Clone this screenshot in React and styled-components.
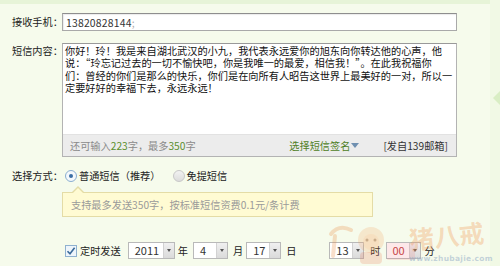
import React from "react";
import styled, { createGlobalStyle } from "styled-components";

const Global = createGlobalStyle`
  html, body { margin: 0; padding: 0; background: #f6fbec; }
  body { font-family: "Noto Sans CJK SC", "Noto Sans", sans-serif; font-size: 10.2px; color: #222; }
  * { box-sizing: border-box; }
`;

const Page = styled.div`
  position: relative;
  width: 500px;
  height: 266px;
  overflow: hidden;
  display: flex;
`;

const Main = styled.div`
  width: 490px;
  display: flex;
  flex-direction: column;
  border-top: 4px solid #e7f4d8;
`;

const Side = styled.div`
  flex: 1;
  background: #f1f9e5;
  position: relative;
`;

const SideArrow = styled.div`
  position: absolute;
  left: 3px;
  top: 91px;
  width: 0;
  height: 0;
  border-top: 7px solid transparent;
  border-bottom: 7px solid transparent;
  border-right: 7px solid #d9eec4;
`;

const Row = styled.div`
  display: flex;
  align-items: ${(p) => p.$align || "flex-start"};
  margin-top: ${(p) => p.$mt || 0}px;
`;

const Label = styled.div`
  width: 50px;
  margin-left: 12px;
  flex: none;
  line-height: 12px;
  padding-top: ${(p) => p.$pt || 0}px;
  white-space: nowrap;
  color: #222;
`;

const Input = styled.div`
  width: 395px;
  height: 18px;
  background: #fff;
  border: 1px solid #a9a9a9;
  border-top-color: #8e8e8e;
  box-shadow: inset 1px 1px 1px rgba(0, 0, 0, 0.08);
  padding-left: 3px;
  display: flex;
  align-items: center;
  color: #333;
  font-size: 10.4px;
  letter-spacing: 0.2px;
`;

const Semi = styled.span`
  color: #aaa;
`;

const Area = styled.div`
  width: 395px;
  border: 1px solid #b3b3b3;
  border-top-color: #999;
  background: #fff;
  display: flex;
  flex-direction: column;
`;

const AreaText = styled.div`
  height: 90px;
  padding: 1px 0 0 2px;
  color: #111;
`;

const Line = styled.div`
  white-space: nowrap;
  line-height: 12.4px;
`;

const AreaBar = styled.div`
  height: 22px;
  background: #ececec;
  border-top: 1px solid #e2e2e2;
  display: flex;
  align-items: center;
  padding-left: 7px;
  padding-right: 8px;
  color: #8a8a8a;
`;

const Num = styled.span`
  color: #5b8f2e;
`;

const Sign = styled.span`
  margin-left: auto;
  color: #4f7f27;
  display: flex;
  align-items: center;
`;

const Caret = styled.span`
  display: inline-block;
  width: 0;
  height: 0;
  margin-left: 1px;
  border-left: 4px solid transparent;
  border-right: 4px solid transparent;
  border-top: 5px solid #6f8fb0;
`;

const From = styled.span`
  margin-left: 24px;
  color: #333;
`;

const Radio = styled.span`
  width: 12px;
  height: 12px;
  border-radius: 50%;
  border: 1px solid ${(p) => (p.$on ? "#8aaed0" : "#c8c8c8")};
  background: ${(p) => (p.$on ? "#f4f8fc" : "linear-gradient(#f2f2f2, #dcdcdc)")};
  display: inline-flex;
  align-items: center;
  justify-content: center;
  margin-left: ${(p) => p.$ml || 0}px;
  margin-right: 2px;
  flex: none;
  &::after {
    content: "";
    width: 4px;
    height: 4px;
    border-radius: 50%;
    background: ${(p) => (p.$on ? "#3a6ea5" : "transparent")};
  }
`;

const Opt = styled.span`
  color: #222;
  line-height: 12px;
`;

const Tip = styled.div`
  position: relative;
  margin-left: 62px;
  margin-top: 10px;
  width: 311px;
  height: 25px;
  background: #fffbd3;
  border: 1px solid #e4dca6;
  display: flex;
  align-items: center;
  padding-left: 8px;
  color: #9a9a9a;
  &::before {
    content: "";
    position: absolute;
    left: 8px;
    top: -7px;
    border-left: 7px solid transparent;
    border-right: 7px solid transparent;
    border-bottom: 7px solid #e4dca6;
  }
  &::after {
    content: "";
    position: absolute;
    left: 9px;
    top: -5px;
    border-left: 6px solid transparent;
    border-right: 6px solid transparent;
    border-bottom: 6px solid #fffbd3;
  }
`;

const Timed = styled.div`
  display: flex;
  align-items: center;
  margin-left: 65px;
  margin-top: 25px;
  height: 17px;
`;

const Check = styled.span`
  width: 12px;
  height: 12px;
  border: 1px solid #8fb1cf;
  background: #eef5fb;
  display: inline-flex;
  align-items: center;
  justify-content: center;
  flex: none;
`;

const Unit = styled.span`
  margin-left: ${(p) => p.$ml || 0}px;
  color: #222;
  white-space: nowrap;
`;

const Select = styled.div`
  margin-left: ${(p) => p.$ml || 0}px;
  width: ${(p) => p.$w}px;
  height: 17px;
  border: 1px solid #b9b9b9;
  background: #fff;
  display: flex;
  flex: none;
`;

const SelVal = styled.span`
  flex: 1;
  padding-left: 6px;
  line-height: 15px;
  font-size: 11px;
  color: ${(p) => p.$c || "#333"};
`;

const SelBtn = styled.span`
  width: 11px;
  background: linear-gradient(#f0f0f0, #dadada);
  border-left: 1px solid #d2d2d2;
  display: flex;
  align-items: center;
  justify-content: center;
  &::after {
    content: "";
    border-left: 2.5px solid transparent;
    border-right: 2.5px solid transparent;
    border-top: 3px solid #555;
  }
`;

const Mark = styled.div`
  position: absolute;
  left: 325px;
  top: 220px;
  width: 175px;
  height: 46px;
  pointer-events: none;
`;

const MarkName = styled.div`
  position: absolute;
  left: 84px;
  top: 0px;
  font-size: 25px;
  font-weight: bold;
  font-family: "Noto Sans CJK SC", sans-serif;
  color: rgba(240, 150, 80, 0.32);
  line-height: 30px;
  white-space: nowrap;
  transform: rotate(-6deg);
`;

const MarkUrl = styled.div`
  position: absolute;
  left: 84px;
  top: 34px;
  font-family: "DejaVu Sans", sans-serif;
  font-weight: bold;
  font-size: 7.5px;
  color: rgba(150, 175, 200, 0.55);
  letter-spacing: 0.3px;
  white-space: nowrap;
`;

function Sel({ w, v, ml, c }) {
  return (
    <Select $w={w} $ml={ml}>
      <SelVal $c={c}>{v}</SelVal>
      <SelBtn />
    </Select>
  );
}

export default function App() {
  return (
    <>
      <Global />
      <Page>
        <Main>
          <Row $align="center" $mt={9}>
            <Label>接收手机：</Label>
            <Input>
              13820828144<Semi>;</Semi>
            </Input>
          </Row>
          <Row $mt={12}>
            <Label $pt={2}>短信内容：</Label>
            <Area>
              <AreaText>
                <Line>你好！玲！我是来自湖北武汉的小九，我代表永远爱你的旭东向你转达他的心声，他</Line>
                <Line>说：“玲忘记过去的一切不愉快吧，你是我唯一的最爱，相信我！”。在此我祝福你</Line>
                <Line>们：曾经的你们是那么的快乐，你们是在向所有人昭告这世界上最美好的一对，所以一</Line>
                <Line>定要好好的幸福下去，永远永远！</Line>
              </AreaText>
              <AreaBar>
                <span>
                  还可输入<Num>223</Num>字，最多<Num>350</Num>字
                </span>
                <Sign>
                  选择短信签名<Caret />
                </Sign>
                <From>[发自139邮箱]</From>
              </AreaBar>
            </Area>
          </Row>
          <Row $align="center" $mt={13}>
            <Label>选择方式：</Label>
            <Radio $on $ml={3} />
            <Opt>普通短信（推荐）</Opt>
            <Radio $ml={12} />
            <Opt>免提短信</Opt>
          </Row>
          <Tip>支持最多发送350字，按标准短信资费0.1元/条计费</Tip>
          <Timed>
            <Check>
              <svg width="10" height="10" viewBox="0 0 10 10">
                <path d="M1.5 5.2 L4 7.8 L8.6 1.8" fill="none" stroke="#3a6a9a" strokeWidth="1.6" />
              </svg>
            </Check>
            <Unit $ml={3}>定时发送</Unit>
            <Sel w={47} v="2011" ml={7} />
            <Unit $ml={3}>年</Unit>
            <Sel w={35} v="4" ml={5} />
            <Unit $ml={5}>月</Unit>
            <Sel w={35} v="17" ml={3} />
            <Unit $ml={5}>日</Unit>
            <Sel w={35} v="13" ml={33} />
            <Unit $ml={6}>时</Unit>
            <Sel w={35} v="00" ml={5} c="#c04040" />
            <Unit $ml={4}>分</Unit>
          </Timed>
        </Main>
        <Side>
          <SideArrow />
        </Side>
        <Mark>
          <svg width="90" height="46" viewBox="0 0 90 46" style={{ position: "absolute", left: 0, top: 0 }}>
            <g fill="none" stroke="rgba(235,140,70,0.28)" strokeWidth="4" strokeLinecap="round">
              <path d="M6 14 Q14 4 26 10" />
              <path d="M10 16 L8 36" />
            </g>
            <circle cx="46" cy="20" r="13" fill="rgba(240,160,90,0.22)" />
            <circle cx="46" cy="22" r="8" fill="rgba(250,210,170,0.35)" />
            <circle cx="42" cy="20" r="1.5" fill="rgba(120,80,40,0.35)" />
            <circle cx="50" cy="20" r="1.5" fill="rgba(120,80,40,0.35)" />
            <rect x="35" y="32" width="22" height="12" rx="4" fill="rgba(230,120,80,0.22)" />
            <rect x="62" y="23" width="34" height="17" rx="1" fill="rgba(240,110,120,0.16)" />
          </svg>
          <MarkName>猪八戒</MarkName>
          <MarkUrl>www.zhubajie.com</MarkUrl>
        </Mark>
      </Page>
    </>
  );
}
